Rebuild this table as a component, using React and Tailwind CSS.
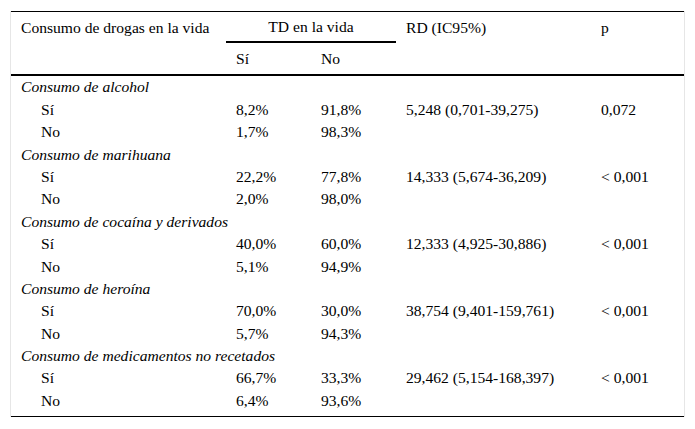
import React from "react";

const groups = [
  { name: "Consumo de alcohol", si: ["8,2%", "91,8%"], no: ["1,7%", "98,3%"], rd: "5,248 (0,701-39,275)", p: "0,072" },
  { name: "Consumo de marihuana", si: ["22,2%", "77,8%"], no: ["2,0%", "98,0%"], rd: "14,333 (5,674-36,209)", p: "< 0,001" },
  { name: "Consumo de cocaína y derivados", si: ["40,0%", "60,0%"], no: ["5,1%", "94,9%"], rd: "12,333 (4,925-30,886)", p: "< 0,001" },
  { name: "Consumo de heroína", si: ["70,0%", "30,0%"], no: ["5,7%", "94,3%"], rd: "38,754 (9,401-159,761)", p: "< 0,001" },
  { name: "Consumo de medicamentos no recetados", si: ["66,7%", "33,3%"], no: ["6,4%", "93,6%"], rd: "29,462 (5,154-168,397)", p: "< 0,001" },
];

function Row({ c1, c2, c3, c4, c5, indent, italic }) {
  return (
    <div className="flex h-[22.4px] items-center">
      {italic ? (
        <div className="w-[215px] whitespace-nowrap pl-[10px] italic">{c1}</div>
      ) : (
        <>
          <div className={"w-[215px] whitespace-nowrap " + (indent ? "pl-[30px]" : "pl-[10px]")}>{c1}</div>
          <div className="w-[85px] pl-[10px]">{c2}</div>
          <div className="w-[85px] pl-[10px]">{c3}</div>
          <div className="w-[195px] whitespace-nowrap pl-[10px]">{c4}</div>
          <div className="w-[93px] whitespace-nowrap pl-[10px]">{c5}</div>
        </>
      )}
    </div>
  );
}

export default function App() {
  return (
    <div className="min-h-[429px] w-[695px] bg-white pt-[11px] pl-[10px] font-['Liberation_Serif','Times_New_Roman',serif] text-[15.6px] leading-none text-black">
      <div className="w-[675px] border-x border-[#e6e6e6]">
        <div className="border-t border-black" />
        {/* header row 1 */}
        <div className="flex h-[31px] items-end">
          <div className="flex h-[30px] w-[215px] items-center whitespace-nowrap pl-[10px]">Consumo de drogas en la vida</div>
          <div className="flex h-[30px] w-[170px] flex-col">
            <div className="flex flex-1 items-center justify-center">TD en la vida</div>
            <div className="h-[2px] bg-black" />
          </div>
          <div className="flex h-[30px] w-[195px] items-center pl-[10px]">RD (IC95%)</div>
          <div className="flex h-[30px] w-[93px] items-center pl-[10px]">p</div>
        </div>
        {/* header row 2 */}
        <div className="flex h-[31px] items-center">
          <div className="w-[215px]" />
          <div className="w-[85px] pl-[10px]">Sí</div>
          <div className="w-[85px] pl-[10px]">No</div>
        </div>
        <div className="h-[2px] bg-black" />
        <div className="pb-[4px]">
          {groups.map((g) => (
            <React.Fragment key={g.name}>
              <Row c1={g.name} italic />
              <Row c1="Sí" c2={g.si[0]} c3={g.si[1]} c4={g.rd} c5={g.p} indent />
              <Row c1="No" c2={g.no[0]} c3={g.no[1]} indent />
            </React.Fragment>
          ))}
        </div>
        <div className="border-t border-black" />
      </div>
    </div>
  );
}
